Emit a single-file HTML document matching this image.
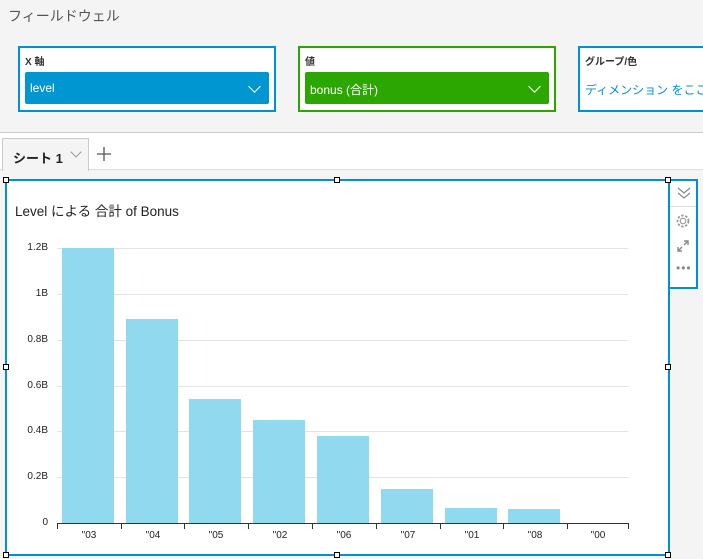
<!DOCTYPE html>
<html><head><meta charset="utf-8"><style>
*{box-sizing:border-box;margin:0;padding:0}
body{width:703px;height:559px;overflow:hidden;background:#f4f4f4;font-family:"Liberation Sans","Noto Sans CJK JP",sans-serif;position:relative}
.abs{position:absolute}
.box{position:absolute;top:46px;height:66px;background:#fff;border:2px solid #0091cf}
.box .lbl{position:absolute;left:5px;top:5px;font-size:10px;color:#333;font-weight:bold}
.dd{position:absolute;left:5px;top:24px;right:5px;height:32px;border-radius:2px;color:#fff;font-size:12px;padding:9px 0 0 5px}
.chev{position:absolute;right:10px;top:10px;width:9px;height:9px;border-right:1.5px solid #fff;border-bottom:1.5px solid #fff;transform:rotate(45deg)}
.h{position:absolute;width:6px;height:6px;background:#fff;border:1px solid #000}
.yl{position:absolute;right:655px;font-size:10px;color:#222;text-align:right}
.g{position:absolute;left:57px;width:571px;height:1px;background:#e3e3e3}
.bar{position:absolute;width:52px;background:#90d9ef}
.xl{position:absolute;top:530px;width:64px;text-align:center;font-size:10px;color:#222}
.tk{position:absolute;top:523px;width:1px;height:6px;background:#333}
</style></head><body>
<div class="abs" style="left:8px;top:6px;font-size:14px;color:#555">フィールドウェル</div>
<div class="box" style="left:18px;width:258px"><div class="lbl">X 軸</div><div class="dd" style="background:#0096d2">level<div class="chev"></div></div></div>
<div class="box" style="left:298px;width:258px;border-color:#2ea600"><div class="lbl">値</div><div class="dd" style="background:#2ca600">bonus (合計)<div class="chev"></div></div></div>
<div class="box" style="left:578px;width:140px"><div class="lbl">グループ/色</div><div class="abs" style="left:5px;top:33px;font-size:12px;color:#0091cf;white-space:nowrap">ディメンション をここ</div></div>
<div class="abs" style="left:0;top:132px;width:703px;height:38px;background:#fff;border-top:1px solid #ccc;border-bottom:1px solid #ddd"></div>
<div class="abs" style="left:2px;top:138px;width:87px;height:33px;background:#f4f4f4;border:1px solid #ccc;border-bottom:none;font-size:13px;font-weight:bold;color:#222;padding:9px 0 0 10px">シート 1</div>
<div class="abs" style="left:72px;top:148px;width:8px;height:8px;border-right:1px solid #999;border-bottom:1px solid #999;transform:rotate(45deg)"></div>
<svg class="abs" style="left:97px;top:147px" width="14" height="14" viewBox="0 0 14 14"><path d="M7 0v14M0 7h14" stroke="#555" stroke-width="1.3"/></svg>
<div class="abs" style="left:5px;top:179px;width:665px;height:377px;background:#fff;border:2px solid #0091cf"></div>
<div class="abs" style="left:668px;top:179px;width:30px;height:110px;background:#fff;border:2px solid #0091cf"></div>
<div class="abs" style="left:670px;top:206px;width:26px;height:1px;background:#ddd"></div>
<svg class="abs" style="left:676px;top:186px" width="16" height="14" viewBox="0 0 16 14"><path d="M2 2l6 5 6-5M2 7l6 5 6-5" fill="none" stroke="#888" stroke-width="1.2"/></svg>
<svg class="abs" style="left:675px;top:213px" width="16" height="16" viewBox="0 0 16 16"><circle cx="8" cy="8" r="5.5" fill="none" stroke="#999" stroke-width="1.8" stroke-dasharray="2.4 1.6"/><circle cx="8" cy="8" r="2.8" fill="none" stroke="#999" stroke-width="1.1"/></svg>
<svg class="abs" style="left:677px;top:240px" width="12" height="12" viewBox="0 0 12 12"><path d="M1 11l4-4M1 7v4h4M11 1L7 5M7 1h4v4" fill="none" stroke="#888" stroke-width="1.4"/></svg>
<div class="abs" style="left:676px;top:265px;font-size:12px;color:#888;letter-spacing:1px;line-height:6px">•••</div>
<div class="h" style="left:3px;top:177px"></div><div class="h" style="left:334px;top:177px"></div><div class="h" style="left:665px;top:177px"></div>
<div class="h" style="left:3px;top:364px"></div><div class="h" style="left:665px;top:364px"></div>
<div class="h" style="left:3px;top:552px"></div><div class="h" style="left:334px;top:552px"></div><div class="h" style="left:665px;top:552px"></div>
<div class="abs" style="left:15px;top:200px;font-size:13.5px;color:#222">Level による 合計 of Bonus</div>
<div class="g" style="top:248px"></div><div class="g" style="top:294px"></div><div class="g" style="top:340px"></div><div class="g" style="top:386px"></div><div class="g" style="top:431px"></div><div class="g" style="top:477px"></div>
<div class="yl" style="top:242px">1.2B</div><div class="yl" style="top:288px">1B</div><div class="yl" style="top:334px">0.8B</div><div class="yl" style="top:380px">0.6B</div><div class="yl" style="top:425px">0.4B</div><div class="yl" style="top:471px">0.2B</div><div class="yl" style="top:517px">0</div>
<div class="bar" style="left:62px;top:248px;height:275px"></div>
<div class="bar" style="left:126px;top:319px;height:204px"></div>
<div class="bar" style="left:189px;top:399px;height:124px"></div>
<div class="bar" style="left:253px;top:420px;height:103px"></div>
<div class="bar" style="left:317px;top:436px;height:87px"></div>
<div class="bar" style="left:381px;top:489px;height:34px"></div>
<div class="bar" style="left:445px;top:508px;height:15px"></div>
<div class="bar" style="left:508px;top:509px;height:14px"></div>
<div class="abs" style="left:57px;top:523px;width:572px;height:1px;background:#333"></div>
<div class="tk" style="left:57px"></div><div class="tk" style="left:121px"></div><div class="tk" style="left:184px"></div><div class="tk" style="left:248px"></div><div class="tk" style="left:312px"></div><div class="tk" style="left:376px"></div><div class="tk" style="left:440px"></div><div class="tk" style="left:503px"></div><div class="tk" style="left:567px"></div><div class="tk" style="left:628px"></div>
<div class="xl" style="left:57px">"03</div><div class="xl" style="left:121px">"04</div><div class="xl" style="left:184px">"05</div><div class="xl" style="left:248px">"02</div><div class="xl" style="left:312px">"06</div><div class="xl" style="left:376px">"07</div><div class="xl" style="left:440px">"01</div><div class="xl" style="left:503px">"08</div><div class="xl" style="left:566px">"00</div>
</body></html>
